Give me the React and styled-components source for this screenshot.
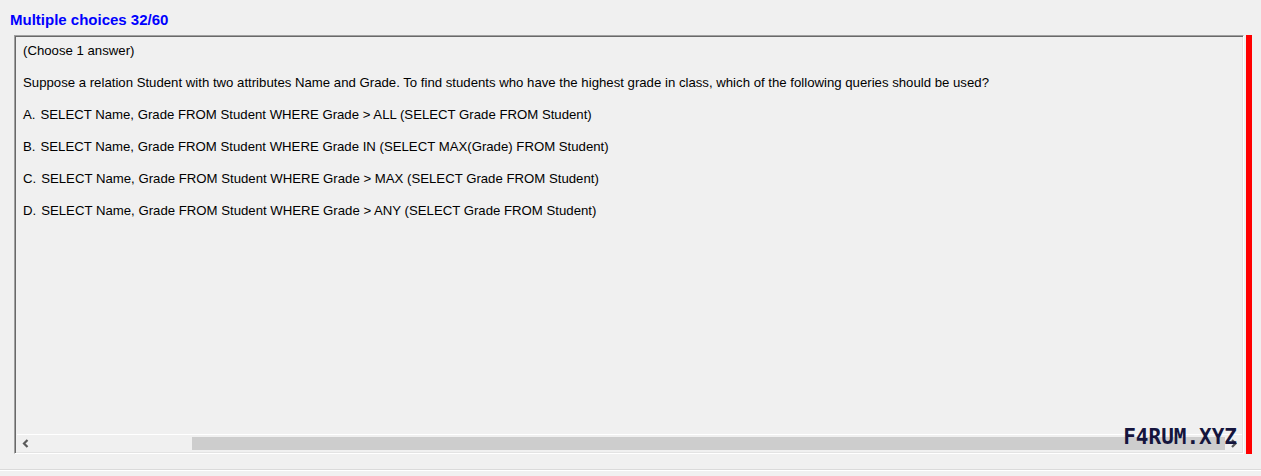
import React from "react";
import styled, { createGlobalStyle } from "styled-components";

const GlobalStyle = createGlobalStyle`
  html, body {
    margin: 0;
    padding: 0;
    background: #f0f0f0;
  }
  body {
    font-family: "Liberation Sans", Arial, sans-serif;
  }
`;

const Page = styled.div`
  width: 1261px;
  height: 476px;
  background: #f0f0f0;
  display: flex;
  flex-direction: column;
  overflow: hidden;
`;

const Title = styled.div`
  height: 35px;
  padding-left: 10px;
  box-sizing: border-box;
  padding-top: 11px;
  color: #0000ff;
  font-size: 15px;
  font-weight: 700;
  line-height: 18px;
`;

const Row = styled.div`
  display: flex;
  gap: 2px;
  padding-left: 14px;
  height: 419px;
`;

const Frame = styled.div`
  position: relative;
  width: 1230px;
  box-sizing: border-box;
  border-style: solid;
  border-width: 1px;
  border-color: #a0a0a0 #ffffff #ffffff #a0a0a0;
  box-shadow: inset 1px 1px 0 #696969, inset -1px -1px 0 #e3e3e3;
  display: flex;
  flex-direction: column;
`;

const Content = styled.div`
  flex: 1;
  padding: 7px 0 0 8px;
  color: #000;
  font-size: 13.2px;
  line-height: 16px;
`;

const Line = styled.div`
  height: 16px;
  margin-bottom: 16px;
  white-space: nowrap;
`;

const Letter = styled.span`
  margin-right: 5px;
`;

const ScrollBar = styled.div`
  height: 17px;
  margin: 0 1px 1px 2px;
  border-top: 1px solid #ffffff;
  display: flex;
  align-items: center;
  background: #f0f0f0;
`;

const Arrow = styled.div`
  width: 17px;
  height: 17px;
  display: flex;
  align-items: center;
  justify-content: center;
`;

const Track = styled.div`
  flex: 1;
  height: 13px;
  display: flex;
  padding-left: 158px;
`;

const Thumb = styled.div`
  flex: 1;
  background: #cdcdcd;
`;

const Watermark = styled.div`
  position: absolute;
  right: 6px;
  bottom: 5px;
  font-family: "DejaVu Sans Mono", "Liberation Mono", monospace;
  font-size: 21px;
  font-weight: 700;
  color: #15153d;
  line-height: 22px;
`;

const RedBar = styled.div`
  width: 6px;
  background: #ff0000;
`;

const Footer = styled.div`
  margin-top: 15px;
  height: 1px;
  background: #dadada;
  border-bottom: 1px solid #ffffff;
`;

const options = [
  ["A.", "SELECT Name, Grade FROM Student WHERE Grade > ALL (SELECT Grade FROM Student)"],
  ["B.", "SELECT Name, Grade FROM Student WHERE Grade IN (SELECT MAX(Grade) FROM Student)"],
  ["C.", "SELECT Name, Grade FROM Student WHERE Grade > MAX (SELECT Grade FROM Student)"],
  ["D.", "SELECT Name, Grade FROM Student WHERE Grade > ANY (SELECT Grade FROM Student)"],
];

function Chevron({ dir }) {
  const d = dir === "left" ? "M5.5 1 L2 4.5 L5.5 8" : "M2 1 L5.5 4.5 L2 8";
  return (
    <svg width="8" height="9" viewBox="0 0 8 9">
      <path d={d} fill="none" stroke="#5a5a5a" strokeWidth="2.2" />
    </svg>
  );
}

export default function App() {
  return (
    <Page>
      <GlobalStyle />
      <Title>Multiple choices 32/60</Title>
      <Row>
        <Frame>
          <Content>
            <Line>(Choose 1 answer)</Line>
            <Line>
              Suppose a relation Student with two attributes Name and Grade. To find students who have the highest grade in class, which of the following queries should be used?
            </Line>
            {options.map(([k, text]) => (
              <Line key={k}>
                <Letter>{k}</Letter>
                {text}
              </Line>
            ))}
          </Content>
          <ScrollBar>
            <Arrow>
              <Chevron dir="left" />
            </Arrow>
            <Track>
              <Thumb />
            </Track>
            <Arrow>
              <Chevron dir="right" />
            </Arrow>
          </ScrollBar>
          <Watermark>F4RUM.XYZ</Watermark>
        </Frame>
        <RedBar />
      </Row>
      <Footer />
    </Page>
  );
}
